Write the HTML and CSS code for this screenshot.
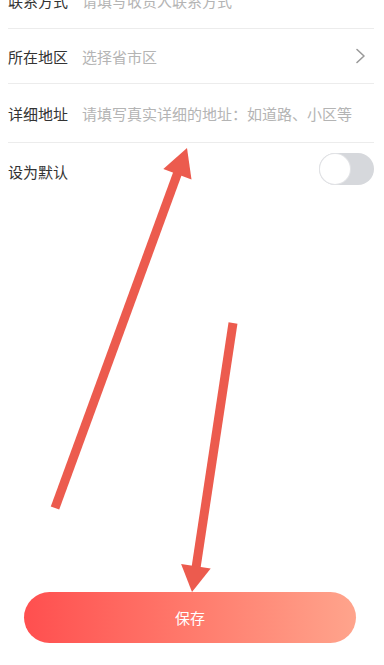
FILE: index.html
```html
<!DOCTYPE html>
<html lang="zh-CN">
<head>
<meta charset="utf-8">
<title>地址编辑</title>
<link rel="stylesheet" href="styles.css">
</head>
<body>
<div class="page">
  <div class="form">
    <div class="row row-1">
      <span class="label">联系方式</span>
      <span class="placeholder">请填写收货人联系方式</span>
    </div>
    <div class="row row-2">
      <span class="label">所在地区</span>
      <span class="placeholder">选择省市区</span>
      <svg class="chevron" width="11" height="16" viewBox="0 0 11 16"><path d="M2 1.5 L9 8 L2 14.5" fill="none" stroke="#9a9a9a" stroke-width="1.6" stroke-linecap="round" stroke-linejoin="round"/></svg>
    </div>
    <div class="row row-3">
      <span class="label">详细地址</span>
      <span class="placeholder">请填写真实详细的地址：如道路、小区等</span>
    </div>
    <div class="row row-4">
      <span class="label">设为默认</span>
      <span class="switch"><span class="knob"></span></span>
    </div>
  </div>
  <button class="save">保存</button>
  <svg class="arrows" width="384" height="665" viewBox="0 0 384 665">
    <g fill="#ec5b4e" stroke="#ec5b4e">
      <line x1="55" y1="508" x2="178" y2="172" stroke-width="9"/>
      <polygon points="187,148 191.5,179.5 163.3,169.1" stroke="none"/>
      <line x1="233" y1="323" x2="196" y2="568" stroke-width="9"/>
      <polygon points="192,592 181.1,564 210.7,568.6" stroke="none"/>
    </g>
  </svg>
</div>
</body>
</html>
```

FILE: styles.css
```css
* { box-sizing: border-box; }
html, body { margin: 0; padding: 0; background: #ffffff; }
body {
  font-family: "Noto Sans CJK SC", "Noto Sans", sans-serif;
  overflow: hidden;
}
.page {
  position: relative;
  width: 384px;
  height: 665px;
  display: flex;
  flex-direction: column;
  overflow: hidden;
}
.form {
  margin: -28px 10px 0 8px;
  display: flex;
  flex-direction: column;
}
.row {
  display: flex;
  align-items: center;
  border-bottom: 1px solid #ececec;
  font-size: 15px;
}
.row-1 { height: 57px; }
.row-2 { height: 55px; padding-right: 8px; }
.row-3 { height: 59px; }
.row-4 { height: 56px; border-bottom: none; }
.label {
  width: 74px;
  flex: none;
  color: #333333;
}
.placeholder {
  flex: 1;
  color: #b4b4b4;
  white-space: nowrap;
}
.chevron { flex: none; }
.switch {
  margin-left: auto;
  width: 55px;
  height: 32px;
  border-radius: 16px;
  background: #d6d8dc;
  position: relative;
  margin-top: -4px;
}
.knob {
  position: absolute;
  left: 1px;
  top: 1px;
  width: 30px;
  height: 30px;
  border-radius: 50%;
  background: #ffffff;
  box-shadow: 0 0 0 1px #e2e3e6;
}
.save {
  margin: auto 28px 22px 24px;
  height: 51px;
  border: none;
  border-radius: 26px;
  background: linear-gradient(90deg, #ff4f4f 0%, #ff7a6c 50%, #ffa48c 100%);
  color: #ffffff;
  font-family: "Noto Sans CJK SC", "Noto Sans", sans-serif;
  font-size: 15px;
  padding: 0;
}
.arrows {
  position: absolute;
  left: 0;
  top: 0;
  pointer-events: none;
}
```
